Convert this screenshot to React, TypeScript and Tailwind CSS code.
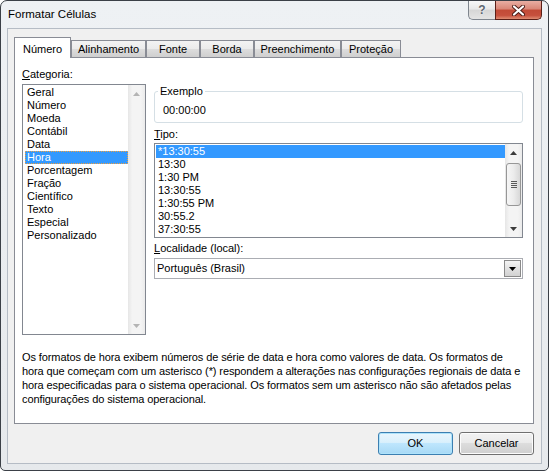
import React from "react";

const CATEGORIAS = [
  "Geral",
  "Número",
  "Moeda",
  "Contábil",
  "Data",
  "Hora",
  "Porcentagem",
  "Fração",
  "Científico",
  "Texto",
  "Especial",
  "Personalizado",
];

const TIPOS = ["*13:30:55", "13:30", "1:30 PM", "13:30:55", "1:30:55 PM", "30:55.2", "37:30:55"];

const TABS = [
  { label: "Número", w: "w-[57px]" },
  { label: "Alinhamento", w: "w-[75px]" },
  { label: "Fonte", w: "w-[54px]" },
  { label: "Borda", w: "w-[54px]" },
  { label: "Preenchimento", w: "w-[87px]" },
  { label: "Proteção", w: "w-[60px]" },
];

function Arrow({ up, color }: { up?: boolean; color: string }) {
  return (
    <svg width="7" height="4" viewBox="0 0 7 4">
      <path d={up ? "M0 4 L3.5 0 L7 4 Z" : "M0 0 L7 0 L3.5 4 Z"} fill={color} />
    </svg>
  );
}

function ScrollBar({ disabled }: { disabled?: boolean }) {
  const arrow = disabled ? "#b4b4b4" : "#3c3c3c";
  return (
    <div className="w-[17px] h-full flex flex-col bg-[linear-gradient(to_right,#e6e6e6,#f4f4f4_25%,#f4f4f4_75%,#ebebeb)]">
      <div className="h-[17px] flex items-center justify-center">
        <Arrow up color={arrow} />
      </div>
      <div className="flex-1 px-[1px]">
        {!disabled && (
          <div className="mt-[2px] h-[43px] rounded-[3px] border border-[#979797] bg-[linear-gradient(to_right,#f6f6f6,#ececec_50%,#d8d8d8)] flex flex-col items-center justify-center gap-[1px]">
            <div className="w-[6px] h-px bg-[#5a5a5a]" />
            <div className="w-[6px] h-px bg-[#5a5a5a]" />
            <div className="w-[6px] h-px bg-[#5a5a5a]" />
            <div className="w-[6px] h-px bg-[#5a5a5a]" />
          </div>
        )}
      </div>
      <div className="h-[17px] flex items-center justify-center">
        <Arrow color={arrow} />
      </div>
    </div>
  );
}

function Button({ label, primary }: { label: string; primary?: boolean }) {
  return (
    <div
      className={`w-[75px] h-[23px] rounded-[3px] border flex items-center justify-center ${
        primary
          ? "border-[#3c7fb1] shadow-[inset_0_0_0_1px_#aee3fb] bg-[linear-gradient(to_bottom,#eaf6fd,#d9f0fc_45%,#bee6fd_50%,#a7d9f5)]"
          : "border-[#707070] shadow-[inset_0_0_0_1px_#fcfcfc] bg-[linear-gradient(to_bottom,#f2f2f2,#ebebeb_45%,#dddddd_50%,#cfcfcf)]"
      }`}
    >
      {label}
    </div>
  );
}

export default function App() {
  return (
    <div className="w-[549px] h-[471px] bg-white font-['Liberation_Sans',Arial,sans-serif] text-[11px] text-black">
      <div className="w-[549px] h-[471px] flex flex-col rounded-t-[7px] rounded-b-[5px] border border-[#3b4047] bg-[linear-gradient(to_bottom,#eef1f4,#e6e9ec)]">
        {/* barra de título */}
        <div className="h-[27px] flex items-start shrink-0">
          <span className="ml-[7px] pt-[6px] leading-[15px] text-[11.5px]">Formatar Células</span>
          <div className="ml-auto mr-[6px] flex">
            <div className="w-[27px] h-[19px] rounded-bl-[5px] border border-t-0 border-r-0 border-[#7e858e] bg-[linear-gradient(to_bottom,#f8f8f8,#e8e8e8_45%,#d6d6d6_50%,#e4e4e4)] flex items-center justify-center">
              <span className="font-bold text-[12px] leading-[12px] text-[#5e6670] [text-shadow:0_0_2px_#ffffff]">?</span>
            </div>
            <div className="w-[47px] h-[19px] rounded-br-[5px] border border-t-0 border-[#5a1f17] bg-[linear-gradient(to_bottom,#e9aea3,#d98676_45%,#c24a36_50%,#c6503d_80%,#e08c72)] flex items-center justify-center">
              <svg width="13" height="11" viewBox="0 0 13 11">
                <path d="M2 1.5 L11 9.5 M11 1.5 L2 9.5" stroke="#4a1a14" strokeWidth="4" strokeLinecap="round" />
                <path d="M2 1.5 L11 9.5 M11 1.5 L2 9.5" stroke="#ffffff" strokeWidth="2.2" strokeLinecap="round" />
              </svg>
            </div>
          </div>
        </div>

        {/* área cliente */}
        <div className="flex-1 mx-[6px] mb-[6px] border border-[#b5bcc5] bg-[#f0f0f0] pt-[8px] pl-[6px] pr-[7px] flex flex-col">
          {/* abas */}
          <div className="h-[20px] flex items-end">
            {TABS.map((t, i) =>
              i === 0 ? (
                <div
                  key={t.label}
                  className={`${t.w} h-[21px] -mb-px relative z-10 bg-white border border-b-0 border-[#898c95] pt-[5px] leading-[13px] text-center`}
                >
                  {t.label}
                </div>
              ) : (
                <div
                  key={t.label}
                  className={`${t.w} h-[17px] border border-b-0 border-[#898c95] bg-[linear-gradient(to_bottom,#f3f3f3,#ebebeb_50%,#dddddd_50%,#cfcfcf)] pt-[2px] leading-[13px] text-center`}
                >
                  {t.label}
                </div>
              )
            )}
          </div>

          {/* painel */}
          <div className="w-[520px] h-[367px] border border-[#898c95] bg-white pt-[10px] pl-[7px]">
            <div className="flex">
              <div className="w-[124px]">
                <div className="leading-[13px]">
                  <span className="underline">C</span>ategoria:
                </div>
                <div className="mt-[3px] h-[251px] border border-[#828790] flex">
                  <div className="flex-1 pt-px pl-[2px]">
                    {CATEGORIAS.map((c) =>
                      c === "Hora" ? (
                        <div
                          key={c}
                          className="h-[13px] leading-[13px] pl-[2px] bg-[#3399ff] text-white outline outline-1 outline-dotted outline-[#f0a040] -outline-offset-1"
                        >
                          {c}
                        </div>
                      ) : (
                        <div key={c} className="h-[13px] leading-[13px] pl-[2px]">
                          {c}
                        </div>
                      )
                    )}
                  </div>
                  <ScrollBar disabled />
                </div>
              </div>

              <div className="ml-[8px] w-[369px]">
                <div className="relative mt-[23px] h-[32px] rounded-[3px] border border-[#d5dfe5] pl-[8px] pt-[12px] leading-[13px]">
                  <span className="absolute left-[3px] -top-[7px] px-[2px] bg-white leading-[13px]">Exemplo</span>
                  00:00:00
                </div>
                <div className="mt-[5px] leading-[13px]">
                  <span className="underline">T</span>ipo:
                </div>
                <div className="mt-[2px] h-[95px] border border-[#828790] flex">
                  <div className="flex-1 pt-px pl-px">
                    {TIPOS.map((t, i) => (
                      <div
                        key={i}
                        className={`h-[13px] leading-[13px] pl-[2px] ${i === 0 ? "bg-[#3399ff] text-white" : ""}`}
                      >
                        {t}
                      </div>
                    ))}
                  </div>
                  <ScrollBar />
                </div>
                <div className="mt-[4px] leading-[13px]">
                  <span className="underline">L</span>ocalidade (local):
                </div>
                <div className="mt-[3px] h-[21px] border border-[#abadb3] flex items-center pl-[2px] pr-px">
                  <span className="flex-1 leading-[13px]">Português (Brasil)</span>
                  <div className="w-[17px] h-[17px] border border-[#8a8a8a] bg-[linear-gradient(to_bottom,#f4f4f4,#e2e2e2_50%,#d2d2d2)] flex items-center justify-center">
                    <Arrow color="#000000" />
                  </div>
                </div>
              </div>
            </div>

            <div className="mt-[15px] leading-[14px] tracking-[-0.1px] whitespace-nowrap">
              <div>Os formatos de hora exibem números de série de data e hora como valores de data. Os formatos de</div>
              <div>hora que começam com um asterisco (*) respondem a alterações nas configurações regionais de data e</div>
              <div>hora especificadas para o sistema operacional. Os formatos sem um asterisco não são afetados pelas</div>
              <div>configurações do sistema operacional.</div>
            </div>
          </div>

          {/* botões */}
          <div className="mt-[8px] flex justify-end gap-[6px]">
            <Button label="OK" primary />
            <Button label="Cancelar" />
          </div>
        </div>
      </div>
    </div>
  );
}
